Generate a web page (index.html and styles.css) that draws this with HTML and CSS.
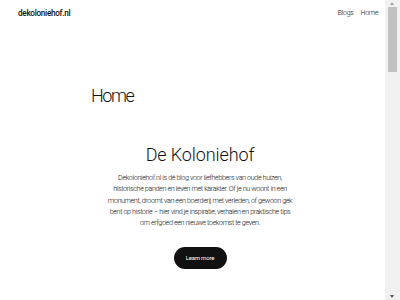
FILE: index.html
```html
<!DOCTYPE html>
<html lang="nl">
<head>
    <meta charset="UTF-8">
    <meta name="viewport" content="width=device-width, initial-scale=1.0">
    <title>Home - dekoloniehof.nl</title>
    <link rel="stylesheet" href="styles.css">
</head>
<body>
    <header class="site-header">
        <a class="logo" href="#">dekoloniehof.nl</a>
        <nav class="nav">
            <a href="#">Blogs</a>
            <a href="#">Home</a>
        </nav>
    </header>

    <main class="page">
        <h1 class="page-title">Home</h1>

        <section class="intro">
            <h2>De Koloniehof</h2>
            <p>Dekoloniehof.nl is dé blog voor liefhebbers van oude huizen, historische panden en leven met karakter. Of je nu woont in een monument, droomt van een boerderij met verleden, of gewoon gek bent op historie – hier vind je inspiratie, verhalen en praktische tips om erfgoed een nieuwe toekomst te geven.</p>
            <a class="button" href="#">Learn more</a>
        </section>

        <section class="more"></section>
    </main>

    <!-- window scrollbar, as in the screenshot -->
    <div class="scrollbar">
        <span class="arrow up"></span>
        <span class="thumb"></span>
        <span class="arrow down"></span>
    </div>
</body>
</html>
```

FILE: styles.css
```css
body {
    font-family: Roboto, "Noto Sans", sans-serif;
    font-weight: 300;
    margin: 0;
    color: #111;
    background-color: #fff;
}

a {
    color: inherit;
    text-decoration: none;
}

.site-header {
    display: flex;
    justify-content: space-between;
    align-items: center;
    padding: 8px 22px 0 18px;
}

.logo {
    font-size: 8.2px;
    font-weight: 500;
    letter-spacing: -0.3px;
}

.nav {
    display: flex;
    gap: 7px;
    font-size: 7px;
    letter-spacing: -0.3px;
}

.page {
    padding: 0 20px;
}

.page-title {
    margin: 67px 0 0 71px;
    font-size: 18px;
    font-weight: 300;
    letter-spacing: -1.4px;
}

.intro {
    text-align: center;
    margin-top: 38px;
}

.intro h2 {
    margin: 0;
    font-size: 18px;
    font-weight: 300;
    letter-spacing: -0.1px;
}

.intro p {
    width: 188px;
    margin: 7px auto 0;
    font-size: 7.2px;
    line-height: 11.3px;
    letter-spacing: -0.38px;
}

.button {
    display: inline-block;
    margin-top: 19px;
    width: 53px;
    height: 22px;
    line-height: 22px;
    border-radius: 11px;
    background-color: #111;
    color: #fff;
    font-size: 6px;
    font-weight: 400;
    letter-spacing: -0.2px;
}

.more {
    height: 950px;
}

.scrollbar {
    position: fixed;
    top: 0;
    right: 0;
    width: 15px;
    height: 100%;
    background-color: #f1f1f1;
}

.thumb {
    position: absolute;
    top: 7px;
    left: 3px;
    width: 9px;
    height: 65px;
    background-color: #c1c1c1;
}

.arrow {
    position: absolute;
    left: 5px;
    width: 0;
    height: 0;
    border-left: 2.5px solid transparent;
    border-right: 2.5px solid transparent;
}

.arrow.up {
    top: 2px;
    border-bottom: 3px solid #a3a3a3;
}

.arrow.down {
    bottom: 2px;
    border-top: 3px solid #505050;
}
```
